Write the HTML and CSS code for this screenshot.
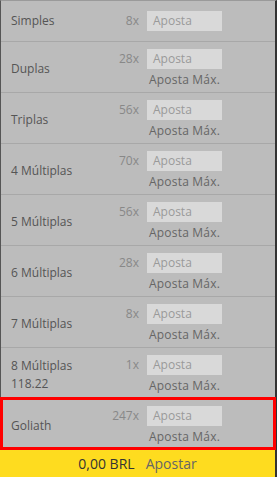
FILE: index.html
```
<!DOCTYPE html>
<html lang="pt">
<head>
<meta charset="utf-8">
<link rel="stylesheet" href="styles.css">
</head>
<body>
<div class="slip">
  <div class="row single">
    <div class="label">Simples</div>
    <div class="odds">8x</div>
    <div class="stake">Aposta</div>
  </div>
  <div class="row">
    <div class="label">Duplas</div>
    <div class="odds">28x</div>
    <div class="stake">Aposta</div>
    <div class="max">Aposta Máx.</div>
  </div>
  <div class="row">
    <div class="label">Triplas</div>
    <div class="odds">56x</div>
    <div class="stake">Aposta</div>
    <div class="max">Aposta Máx.</div>
  </div>
  <div class="row">
    <div class="label">4 Múltiplas</div>
    <div class="odds">70x</div>
    <div class="stake">Aposta</div>
    <div class="max">Aposta Máx.</div>
  </div>
  <div class="row">
    <div class="label">5 Múltiplas</div>
    <div class="odds">56x</div>
    <div class="stake">Aposta</div>
    <div class="max">Aposta Máx.</div>
  </div>
  <div class="row">
    <div class="label">6 Múltiplas</div>
    <div class="odds">28x</div>
    <div class="stake">Aposta</div>
    <div class="max">Aposta Máx.</div>
  </div>
  <div class="row">
    <div class="label">7 Múltiplas</div>
    <div class="odds">8x</div>
    <div class="stake">Aposta</div>
    <div class="max">Aposta Máx.</div>
  </div>
  <div class="row">
    <div class="label two">8 Múltiplas<br>118.22</div>
    <div class="odds">1x</div>
    <div class="stake">Aposta</div>
    <div class="max">Aposta Máx.</div>
  </div>
  <div class="row goliath">
    <div class="label">Goliath</div>
    <div class="odds">247x</div>
    <div class="stake">Aposta</div>
    <div class="max">Aposta Máx.</div>
  </div>
  <div class="place">
    <span class="amount">0,00 BRL</span>
    <span class="action">Apostar</span>
  </div>
</div>
</body>
</html>
```
FILE: styles.css
```
html, body {
  margin: 0;
  padding: 0;
  background: #2b2b2b;
}
body {
  font-family: "Open Sans", "Liberation Sans", sans-serif;
  font-size: 12px;
  width: 277px;
  height: 477px;
}
.slip {
  width: 277px;
  height: 477px;
  box-sizing: border-box;
  border-left: 1px solid #555;
  border-right: 2px solid #333;
  border-top: 1px solid #9a9a9a;
  background: #bcbcbc;
  display: flex;
  flex-direction: column;
}
.row {
  display: grid;
  grid-template-columns: 1fr auto 75px;
  grid-template-rows: 20px 16px;
  column-gap: 8px;
  row-gap: 3px;
  padding: 7px 53px 4px 10px;
  border-bottom: 1px solid #a8a8a8;
  height: 50px;
  box-sizing: content-box;
}
.row.single {
  grid-template-rows: 20px;
  padding: 10px 53px 10px 10px;
  height: 20px;
}
.label {
  grid-row: 1 / -1;
  grid-column: 1;
  align-self: center;
  color: #555;
  line-height: 18px;
}
.odds {
  grid-row: 1;
  grid-column: 2;
  align-self: center;
  color: #888;
  line-height: 20px;
}
.stake {
  grid-row: 1;
  grid-column: 3;
  background: #d9d9d9;
  color: #9a9a9a;
  line-height: 20px;
  padding-left: 6px;
}
.max {
  grid-row: 2;
  grid-column: 3;
  justify-self: center;
  white-space: nowrap;
  color: #666;
  line-height: 16px;
  font-size: 12px;
  letter-spacing: 0.2px;
}
.goliath {
  margin: -2px -1px 0 -1px;
  border: 3px solid #ff0000;
  padding: 6px 51px 2px 8px;
  height: 47px;
}
.place {
  flex: 1;
  background: #fedc1f;
  margin-left: -1px;
  display: flex;
  justify-content: center;
  align-items: center;
  gap: 11px;
  font-size: 14px;
  line-height: 27px;
}
.amount {
  color: #333;
}
.action {
  color: #666;
}
```
